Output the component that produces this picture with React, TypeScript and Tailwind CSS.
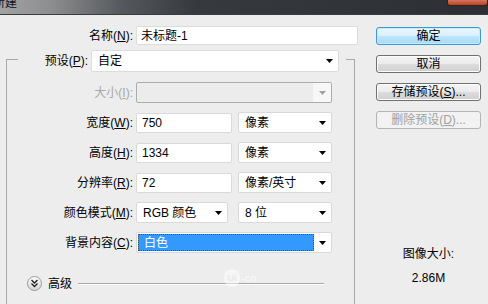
import React from "react";

function Arrow({ c = "#000" }: { c?: string }) {
  return (
    <svg width="7" height="4" viewBox="0 0 7 4" className="shrink-0">
      <polygon points="0,0 7,0 3.5,4" fill={c} />
    </svg>
  );
}

function Sel({ w, text, cls = "" }: { w: string; text: string; cls?: string }) {
  return (
    <div
      className={`${w} ${cls} h-[21px] bg-white border border-[#d9d9d9] rounded-[2px] flex items-center justify-between pl-[6px] pr-[5px]`}
    >
      <span className="leading-none">{text}</span>
      <Arrow />
    </div>
  );
}

function Inp({ w, text }: { w: string; text: string }) {
  return (
    <div className={`${w} h-[20px] bg-white border border-[#d9d9d9] rounded-[2px] flex items-center pl-[5px]`}>
      <span className="leading-none">{text}</span>
    </div>
  );
}

function Btn({
  children,
  kind = "normal",
}: {
  children: React.ReactNode;
  kind?: "normal" | "default" | "disabled";
}) {
  const base = "w-[105px] h-[18px] rounded-[3px] border flex items-center justify-center leading-none";
  if (kind === "default")
    return (
      <div
        className={`${base} border-[#3c9ad3] bg-[linear-gradient(to_bottom,#eaf6fd_0%,#d9f0fc_50%,#bee6fd_50%,#a7d9f5_100%)] shadow-[inset_0_0_0_1px_#c4ecff]`}
      >
        {children}
      </div>
    );
  if (kind === "disabled")
    return (
      <div className={`${base} border-[#b4b4b4] bg-[#f2f2f2] text-[#a0a0a0]`}>{children}</div>
    );
  return (
    <div
      className={`${base} border-[#707070] bg-[linear-gradient(to_bottom,#f4f4f4_0%,#ebebeb_50%,#dddddd_50%,#cfcfcf_100%)] shadow-[inset_0_0_0_1px_#fcfcfc]`}
    >
      {children}
    </div>
  );
}

function Row({ label, children, disabled = false }: { label: React.ReactNode; children: React.ReactNode; disabled?: boolean }) {
  return (
    <div className="flex items-center h-[21px]">
      <div className={`w-[126px] text-right leading-none ${disabled ? "text-[#a8a8a8]" : ""}`}>{label}</div>
      <div className="ml-[3px] flex items-center">{children}</div>
    </div>
  );
}

export default function App() {
  return (
    <div className="w-[488px] h-[304px] overflow-hidden bg-[#ededed] text-[12px] text-black font-['Liberation_Sans','Noto_Sans_CJK_SC',sans-serif] flex flex-col">
      {/* title bar */}
      <div className="h-[15px] shrink-0 border-b border-[#3a3d40] bg-[linear-gradient(to_right,#a2a2a2_0%,#8e8f90_10%,#55595d_25%,#363a3f_40%,#2c3035_100%)] flex items-start justify-between overflow-hidden">
        <span className="ml-[-7px] mt-[-5px] text-[12px] leading-[16px] text-[#111]">新建</span>
        <div className="flex items-start h-full">
          <div className="w-[41px] h-[6px] rounded-b-[3px] border border-t-0 border-[#4a1a0c] bg-[linear-gradient(to_bottom,#d5755b,#b0452b)]" />
        </div>
      </div>

      <div className="flex flex-1 min-h-0">
        {/* left column */}
        <div className="w-[360px] flex flex-col">
          {/* name row */}
          <div className="flex items-center mt-[11px] h-[19px]">
            <div className="w-[133px] text-right leading-none">
              名称(<u>N</u>):
            </div>
            <div className="ml-[3px] w-[222px] h-[19px] bg-white border border-[#dcdcdc] rounded-[2px] flex items-center pl-[4px]">
              <span className="leading-none">未标题-1</span>
            </div>
          </div>

          {/* preset row / fieldset top */}
          <div className="flex items-stretch mt-[5px] h-[22px]">
            <div className="ml-[6px] w-[12px] mt-[9px] border-l border-t border-[#a8a8a8]" />
            <div className="w-[70px] text-right leading-none self-center">
              预设(<u>P</u>):
            </div>
            <div className="ml-[3px] w-[248px] h-[22px] bg-white border border-[#dcdcdc] rounded-[2px] flex items-center justify-between pl-[6px] pr-[5px]">
              <span className="leading-none">自定</span>
              <Arrow />
            </div>
            <div className="w-[7px]" />
            <div className="w-[9px] mt-[9px] border-r border-t border-[#a8a8a8]" />
          </div>

          {/* fieldset body */}
          <div className="ml-[6px] w-[349px] flex-1 border-l border-r border-[#a8a8a8] flex flex-col">
            <div className="mt-[10px] flex flex-col gap-[9px]">
              <Row label={<>大小(<u>I</u>):</>} disabled>
                <div className="w-[196px] h-[21px] border border-[#acacac] rounded-[2px] bg-[#ececec] flex justify-end overflow-hidden">
                  <div className="w-[18px] h-full bg-[#f7f7f7] flex items-center justify-center">
                    <Arrow c="#a0a0a0" />
                  </div>
                </div>
              </Row>
              <Row label={<>宽度(<u>W</u>):</>}>
                <Inp w="w-[96px]" text="750" />
                <Sel w="w-[94px]" cls="ml-[6px]" text="像素" />
              </Row>
              <Row label={<>高度(<u>H</u>):</>}>
                <Inp w="w-[96px]" text="1334" />
                <Sel w="w-[94px]" cls="ml-[6px]" text="像素" />
              </Row>
              <Row label={<>分辨率(<u>R</u>):</>}>
                <Inp w="w-[96px]" text="72" />
                <Sel w="w-[94px]" cls="ml-[6px]" text="像素/英寸" />
              </Row>
              <Row label={<>颜色模式(<u>M</u>):</>}>
                <Sel w="w-[92px]" text="RGB 颜色" />
                <Sel w="w-[94px]" cls="ml-[10px]" text="8 位" />
              </Row>
              <Row label={<>背景内容(<u>C</u>):</>}>
                <div className="w-[196px] h-[21px] bg-white border border-[#d9d9d9] rounded-[2px] flex items-center pl-[1px] pr-[5px]">
                  <div className="w-[176px] h-[17px] bg-[#3399ff] border border-dotted border-[#6b4a1a] flex items-center pl-[5px] text-white leading-none">
                    白色
                  </div>
                  <div className="flex-1 flex justify-end">
                    <Arrow />
                  </div>
                </div>
              </Row>
            </div>

            {/* advanced */}
            <div className="relative mt-[23px] ml-[20px] flex items-center h-[15px]">
              <svg width="15" height="15" viewBox="0 0 15 15" className="shrink-0">
                <defs>
                  <linearGradient id="cg" x1="0" y1="0" x2="0" y2="1">
                    <stop offset="0" stopColor="#ffffff" />
                    <stop offset="1" stopColor="#d4d4d4" />
                  </linearGradient>
                </defs>
                <circle cx="7.5" cy="7.5" r="7" fill="url(#cg)" stroke="#9a9a9a" />
                <polyline points="4.5,4 7.5,7 10.5,4" fill="none" stroke="#222" strokeWidth="1.3" />
                <polyline points="4.5,7.5 7.5,10.5 10.5,7.5" fill="none" stroke="#222" strokeWidth="1.3" />
              </svg>
              <span className="ml-[6px] leading-none">高级</span>
              <div className="ml-[6px] w-[246px] h-[2px] border-t border-[#a8a8a8] border-b border-b-white" />
              <div className="absolute left-[197px] top-[-7px] flex items-center opacity-70 pointer-events-none">
                <div className="w-[16px] h-[18px] rounded-full bg-white/70 flex items-center justify-center text-[9px] font-bold text-[#e6e6e6] leading-none">
                  Ui
                </div>
                <span className="ml-[1px] text-white text-[11px] leading-none">-cn</span>
              </div>
            </div>
          </div>
        </div>

        {/* right column */}
        <div className="flex-1 pl-[16px] flex flex-col">
          <div className="mt-[12px] flex flex-col gap-[10px]">
            <Btn kind="default">确定</Btn>
            <Btn>取消</Btn>
            <Btn>
              存储预设(<u>S</u>)...
            </Btn>
            <Btn kind="disabled">
              删除预设(<u>D</u>)...
            </Btn>
          </div>
          <div className="w-[105px] mt-[117px] text-center leading-[16px]">图像大小:</div>
          <div className="w-[105px] mt-[8px] text-center leading-[16px]">2.86M</div>
        </div>
      </div>
    </div>
  );
}
